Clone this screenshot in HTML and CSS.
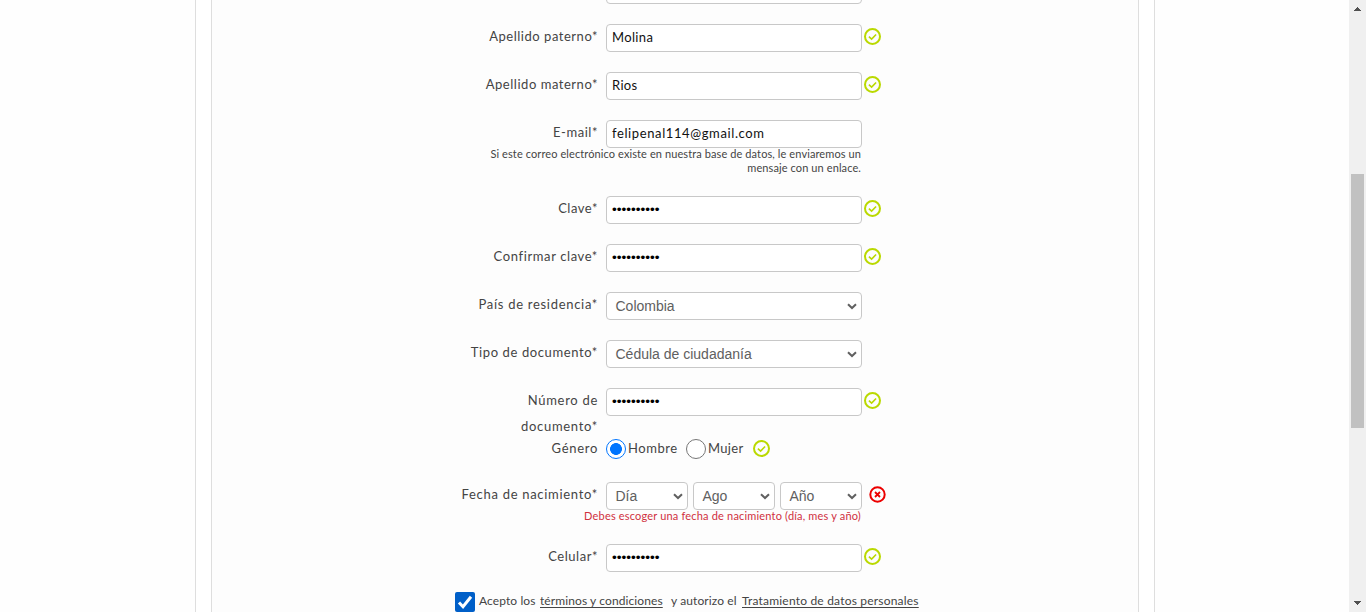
FILE: index.html
```html
<!DOCTYPE html>
<html lang="es">
<head>
<meta charset="utf-8">
<title>Registro</title>
<link rel="stylesheet" href="styles.css">
</head>
<body>
<svg class="defs" aria-hidden="true">
  <symbol id="ok" viewBox="0 0 18 18"><circle cx="8.5" cy="8.5" r="7.5" fill="none" stroke="#bad900" stroke-width="2"/><path d="M4.9 8.7l2.7 2.4 4.5-4.6" fill="none" stroke="#bad900" stroke-width="1.6"/></symbol>
  <symbol id="bad" viewBox="0 0 18 18"><circle cx="8.5" cy="8.5" r="7.2" fill="none" stroke="#ec0000" stroke-width="2"/><path d="M6 6l5 5M11 6l-5 5" fill="none" stroke="#ec0000" stroke-width="1.8"/></symbol>
  <symbol id="chev" viewBox="0 0 10 7"><path d="M1 1.2l4 3.8 4-3.8" fill="none" stroke="#606060" stroke-width="2"/></symbol>
</svg>
<div class="viewport">
  <div class="page">
    <main class="panel">
      <div class="row first"><span></span><div class="field"></div></div>
      <div class="row"><label class="label">Apellido paterno*</label><div class="field"><span class="value">Molina</span></div><svg class="icon"><use href="#ok"/></svg></div>
      <div class="row"><label class="label">Apellido materno*</label><div class="field"><span class="value">Rios</span></div><svg class="icon"><use href="#ok"/></svg></div>
      <div class="row email"><label class="label">E-mail*</label><div class="field"><span class="value mail">felipenal114@gmail.com</span></div><p class="hint">Si este correo electrónico existe en nuestra base de datos, le enviaremos un<br>mensaje con un enlace.</p></div>
      <div class="row"><label class="label">Clave*</label><div class="field"><span class="dots">••••••••••</span></div><svg class="icon"><use href="#ok"/></svg></div>
      <div class="row"><label class="label mid">Confirmar clave*</label><div class="field"><span class="dots">••••••••••</span></div><svg class="icon"><use href="#ok"/></svg></div>
      <div class="row"><label class="label wide">País de residencia*</label><div class="field select"><span>Colombia</span><svg class="chev"><use href="#chev"/></svg></div></div>
      <div class="row"><label class="label mid">Tipo de documento*</label><div class="field select"><span>Cédula de ciudadanía</span><svg class="chev"><use href="#chev"/></svg></div></div>
      <div class="row number"><label class="label wide">Número de<br>documento*</label><div class="field"><span class="dots">••••••••••</span></div><svg class="icon"><use href="#ok"/></svg></div>
      <div class="row gender"><label class="label wide">Género</label><div class="options"><span class="radio on"></span><span class="option man">Hombre</span><span class="radio"></span><span class="option woman">Mujer</span><svg class="icon"><use href="#ok"/></svg></div></div>
      <div class="row birth"><label class="label wide">Fecha de nacimiento*</label><div class="dates"><div class="field select"><span>Día</span><svg class="chev"><use href="#chev"/></svg></div><div class="field select"><span>Ago</span><svg class="chev"><use href="#chev"/></svg></div><div class="field select"><span>Año</span><svg class="chev"><use href="#chev"/></svg></div></div><svg class="icon wrong"><use href="#bad"/></svg><p class="hint error">Debes escoger una fecha de nacimiento (día, mes y año)</p></div>
      <div class="row"><label class="label">Celular*</label><div class="field"><span class="dots">••••••••••</span></div><svg class="icon"><use href="#ok"/></svg></div>
      <div class="terms"><svg class="check" viewBox="0 0 20 20"><rect width="20" height="20" rx="2" fill="#005fc8"/><path d="M4 10.5l4 4.2 8-10" fill="none" stroke="#fff" stroke-width="3"/></svg><span class="t1">Acepto los</span><a class="t2">términos y condiciones</a><span class="t3">y autorizo el</span><a class="t4">Tratamiento de datos personales</a></div>
    </main>
  </div>
  <div class="scrollbar">
    <svg class="arrow" viewBox="0 0 7 4" shape-rendering="crispEdges"><path d="M3 0h1v1h1v1h1v1h1v1H0V3h1V2h1V1h1z" fill="#505050"/></svg>
    <div class="thumb"></div>
    <svg class="arrow" viewBox="0 0 7 4" shape-rendering="crispEdges"><path d="M0 0h7v1H6v1H5v1H4v1H3V3H2V2H1V1H0z" fill="#505050"/></svg>
  </div>
</div>
</body>
</html>
```
FILE: styles.css
```css
* { box-sizing: border-box; }
body { margin: 0; overflow: hidden; background: #fefefe; font-family: Lato, sans-serif; font-size: 13px; color: #444; }
.defs { display: none; }
.viewport { display: flex; height: 612px; overflow: hidden; }
.page { width: 960px; margin-left: 195px; padding: 0 15px; border: solid #dedede; border-width: 0 1px; background: #fff; }
.panel { height: 612px; overflow: hidden; border: solid #dedede; border-width: 0 1px; background: #fdfdfd; }
.row { display: grid; grid-template-columns: 386px 256px 25px; column-gap: 8px; height: 48px; align-content: start; }
.row.first { height: 48px; margin-top: -24px; }
.email { height: 76px; }
.number { height: 50px; }
.gender { height: 44px; }
.birth { height: 62px; }
.label { height: 28px; margin-top: -1px; text-align: right; line-height: 26px; letter-spacing: .53px; white-space: nowrap; }
.label.mid { letter-spacing: .61px; }
.label.wide { letter-spacing: .7px; }
.field { display: flex; align-items: center; height: 28px; padding: 0 5px 2px; border: 1px solid #c8c8c8; border-radius: 4px; background: #fff; color: #111; }
.value { letter-spacing: .35px; }
.value.mail { letter-spacing: .61px; }
.dots { color: #000; font: 13.6px "Liberation Sans", Arial, sans-serif; }
.select { justify-content: space-between; padding: 0 4px 0 8.5px; color: #606060; font: 14px "Liberation Sans", Arial, sans-serif; }
.chev { width: 10px; height: 7px; }
.icon { width: 18px; height: 18px; margin: 4px 0 0 -6px; }
.wrong { margin: 4px 0 0 -1px; }
.hint { grid-column: 1 / 3; margin: -1px 1px 0 0; font-size: 11px; line-height: 14px; text-align: right; letter-spacing: .1px; white-space: nowrap; }
.error { color: #d0303e; letter-spacing: .18px; }
.options { display: flex; align-items: center; height: 22px; white-space: nowrap; letter-spacing: .55px; }
.gender .label { line-height: 22px; height: 22px; margin: -1px 0 0; }
.radio { width: 20px; height: 20px; flex: none; border: 1px solid #767676; border-radius: 50%; background: #fff; }
.radio.on { border-color: #0075ff; background: radial-gradient(circle, #0075ff 5.6px, #fff 6.2px); }
.option { padding: 0 0 2px 2px; }
.man { width: 60px; }
.woman { width: 47px; letter-spacing: .3px; }
.options .icon { margin: 0; }
.dates { display: flex; gap: 5px; }
.dates .field { flex: 1; }
.terms { display: flex; align-items: center; height: 20px; padding-left: 243px; font-size: 12px; white-space: nowrap; letter-spacing: .1px; }
.terms span, .terms a { padding-bottom: 3px; }
.terms a { text-decoration: underline; text-underline-offset: 2px; }
.check { width: 20px; height: 20px; margin-right: 4px; }
.t1 { width: 61px; }
.t2 { width: 131px; }
.t3 { width: 71px; }
.t4 { letter-spacing: .2px; }
.scrollbar { display: flex; flex-direction: column; align-items: center; width: 17px; height: 612px; margin-left: auto; padding: 7px 0; background: #f0f0f0; }
.arrow { width: 7px; height: 4px; }
.thumb { width: 13px; height: 254px; margin: 163px 0 auto; background: #c1c1c1; }
```
